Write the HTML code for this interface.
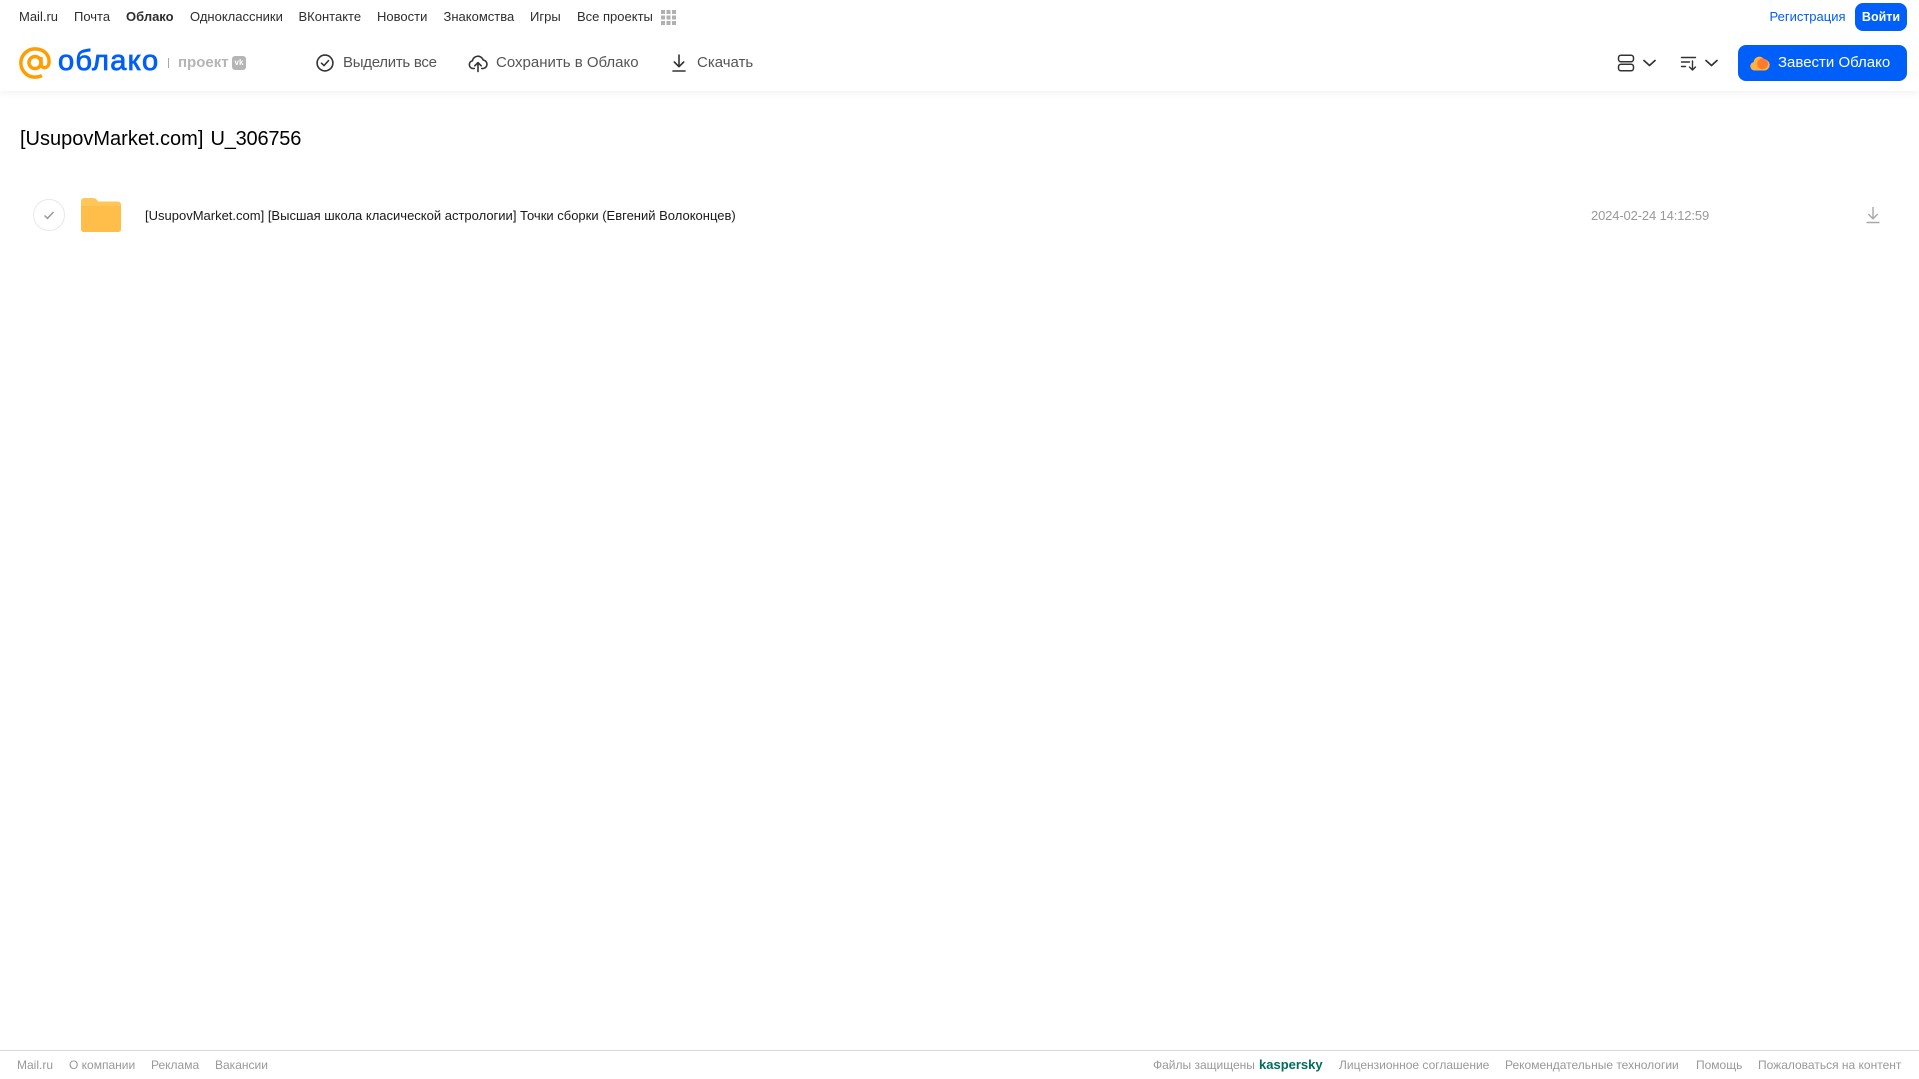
<!DOCTYPE html>
<html lang="ru">
<head>
<meta charset="utf-8">
<title>Облако</title>
<style>
html,body{margin:0;padding:0;background:#fff}
body{width:1919px;height:1079px;position:relative;overflow:hidden;font-family:"Liberation Sans",Arial,sans-serif;color:#333}
.t{position:absolute;white-space:nowrap;line-height:20px}
.n{font-size:13px;top:7px;color:#2c2d2e}
.a{font-size:15px;top:53px;color:#545558}
.f{font-size:12px;top:1055px;color:#999}
svg{position:absolute;display:block}
#hdr{position:absolute;left:0;top:0;width:1919px;height:91px;background:#fff;box-shadow:0 1px 8px rgba(0,0,0,.07)}
.btn{position:absolute;background:#005ff9}
</style>
</head>
<body>
<div id="hdr"></div>

<div class="t n" style="left:19px">Mail.ru</div>
<div class="t n" style="left:74px">Почта</div>
<div class="t n" style="left:126px;font-weight:bold">Облако</div>
<div class="t n" style="left:190px">Одноклассники</div>
<div class="t n" style="left:298.500px">ВКонтакте</div>
<div class="t n" style="left:377px">Новости</div>
<div class="t n" style="left:443.500px">Знакомства</div>
<div class="t n" style="left:530px">Игры</div>
<div class="t n" style="left:577px">Все проекты</div>
<svg style="left:661px;top:10px" width="15" height="15" viewBox="0 0 15 15" fill="#b0b0b0">
<rect x="0" y="0" width="4" height="4"/><rect x="5.500" y="0" width="4" height="4"/><rect x="11" y="0" width="4" height="4"/>
<rect x="0" y="5.500" width="4" height="4"/><rect x="5.500" y="5.500" width="4" height="4"/><rect x="11" y="5.500" width="4" height="4"/>
<rect x="0" y="11" width="4" height="4"/><rect x="5.500" y="11" width="4" height="4"/><rect x="11" y="11" width="4" height="4"/>
</svg>

<div class="t n" style="left:1769.500px;color:#005ff9">Регистрация</div>
<div class="btn" style="left:1855px;top:3px;width:52px;height:28px;border-radius:8px"></div>
<div class="t" style="left:1855px;top:7px;width:52px;text-align:center;font-size:12.500px;color:#fff;font-weight:bold">Войти</div>

<!-- logo -->
<svg style="left:19px;top:47px" width="32" height="32" viewBox="0 0 35 35" fill="none" stroke="#ff9e00" stroke-width="3.800">
<circle cx="17.500" cy="17" r="6.600"/>
<path d="M24.100 11v7.500c0 5.500 7.700 5.500 8.600-.5C34 8 26.500 2 17.500 2 9 2 2 9 2 17.500S9 33 17.500 33c3 0 5.300-.6 7.500-1.800"/>
</svg>
<div class="t" id="logo" style="left:58px;top:41px;font-size:29px;line-height:40px;font-weight:normal;color:#005ff9;letter-spacing:1.300px;-webkit-text-stroke:.8px #005ff9">облако</div>
<div style="position:absolute;left:168px;top:58px;width:1px;height:10px;background:#aaa"></div>
<div class="t" style="left:178px;top:53px;font-size:15px;font-weight:bold;color:#b5b5b5">проект</div>
<div style="position:absolute;left:232px;top:56px;width:14px;height:14px;border-radius:3px;background:#b5b5b5;color:#fff;font-size:8px;line-height:14px;text-align:center;font-weight:bold">vk</div>

<!-- toolbar -->
<svg style="left:315px;top:53px" width="20" height="20" viewBox="0 0 20 20" fill="none" stroke="#333" stroke-width="1.600" stroke-linecap="round" stroke-linejoin="round">
<circle cx="10" cy="10" r="7.900"/><path d="M6.500 10.200l2.500 2.400 4.500-5"/>
</svg>
<div class="t a" style="left:343px;letter-spacing:-.28px">Выделить все</div>

<svg style="left:468px;top:53px" width="20" height="20" viewBox="0 0 20 20" fill="none" stroke="#333" stroke-width="1.600" stroke-linecap="round" stroke-linejoin="round">
<path d="M6.300 15.500H5a3.900 3.900 0 0 1-.6-7.700A5.600 5.600 0 0 1 15.200 7a4.300 4.300 0 0 1 .2 8.500h-1.700"/><path d="M10 18.500V10M6.800 12.800L10 9.600l3.200 3.200"/>
</svg>
<div class="t a" style="left:496px">Сохранить в Облако</div>

<svg style="left:669px;top:53px" width="20" height="20" viewBox="0 0 20 20" fill="none" stroke="#333" stroke-width="1.600" stroke-linecap="round" stroke-linejoin="round">
<path d="M10 2v11.500M5.300 9l4.700 4.700L14.700 9M4 18h12"/>
</svg>
<div class="t a" style="left:697px">Скачать</div>

<svg style="left:1617px;top:54px" width="18" height="18" viewBox="0 0 18 18" fill="none" stroke="#333" stroke-width="1.500">
<rect x="1.500" y="1.200" width="15" height="6.600" rx="2.500"/><rect x="1.500" y="10.200" width="15" height="6.600" rx="2.500"/>
</svg>
<svg style="left:1642px;top:58px" width="15" height="10" viewBox="0 0 15 10" fill="none" stroke="#333" stroke-width="1.700" stroke-linecap="round" stroke-linejoin="round"><path d="M2 2.500l5.500 5 5.500-5"/></svg>
<svg style="left:1680px;top:54px" width="18" height="18" viewBox="0 0 18 18" fill="none" stroke="#333" stroke-width="1.400" stroke-linecap="round" stroke-linejoin="round">
<path d="M1.500 3.500h14M1.500 8h8M1.500 12.500h4M12.500 7v9M9.500 13l3 3 3-3"/>
</svg>
<svg style="left:1704px;top:58px" width="15" height="10" viewBox="0 0 15 10" fill="none" stroke="#333" stroke-width="1.700" stroke-linecap="round" stroke-linejoin="round"><path d="M2 2.500l5.500 5 5.500-5"/></svg>

<div class="btn" style="left:1738px;top:45px;width:169px;height:36px;border-radius:8px"></div>
<svg style="left:1750px;top:53px" width="20" height="19" viewBox="0 0 20 19">
<path fill="#ffb23e" d="M4.500 17.500A4.300 4.300 0 0 1 3.700 9 5.600 5.600 0 0 1 14 6.200a5.700 5.700 0 0 1 1 11.300z"/>
<circle cx="12.600" cy="10.800" r="5.400" fill="#ff7a2e"/>
</svg>
<div class="t a" style="left:1778px;color:#fff">Завести Облако</div>

<!-- title -->
<div class="t" style="left:20px;top:126px;font-size:20px;line-height:26px;color:#000;word-spacing:1.500px">[UsupovMarket.com] <span style="letter-spacing:-.2px">U_306756</span></div>

<!-- row -->
<div style="position:absolute;left:33px;top:199px;width:30px;height:30px;border:1px solid #e7e8ea;border-radius:50%"></div>
<svg style="left:42px;top:208px" width="14" height="14" viewBox="0 0 14 14" fill="none" stroke="#999" stroke-width="1.500"><path d="M2.500 7.500l3 2.800 6-6.300"/></svg>
<svg style="left:81px;top:198px" width="40" height="34" viewBox="0 0 40 34">
<path fill="#ffc75a" d="M0 3a3 3 0 0 1 3-3h9c2 0 2.800 .6 3.800 1.800L17.500 3.500H37a3 3 0 0 1 3 3V10H0z"/>
<path fill="#ffbd4a" d="M0 8h40v23.500a2.500 2.500 0 0 1-2.500 2.500h-35A2.500 2.500 0 0 1 0 31.500z"/>
</svg>
<div class="t" style="left:145px;top:206px;font-size:13px;color:#1a1a1a">[UsupovMarket.com] [Высшая школа класической астрологии] Точки сборки (Евгений Волоконцев)</div>
<div class="t" style="left:1591px;top:206px;font-size:13px;color:#999;letter-spacing:-.14px">2024-02-24 14:12:59</div>
<svg style="left:1865px;top:206px" width="16" height="18" viewBox="0 0 16 18" fill="none" stroke="#a8a8a8" stroke-width="1.400">
<path d="M8 1v11.500M3.300 8l4.700 4.700L12.700 8M1.500 16.500h13"/>
</svg>

<!-- footer -->
<div style="position:absolute;left:0;top:1050px;width:1919px;height:1px;background:#d9d9d9"></div>
<div class="t f" style="left:17px">Mail.ru</div>
<div class="t f" style="left:69px">О компании</div>
<div class="t f" style="left:151px">Реклама</div>
<div class="t f" style="left:215px">Вакансии</div>
<div class="t f" style="left:1153px">Файлы защищены</div>
<div class="t f" style="left:1259px;color:#006d5c;font-weight:bold;font-size:13px">kaspersky</div>
<div class="t f" style="left:1339px">Лицензионное соглашение</div>
<div class="t f" style="left:1505px">Рекомендательные технологии</div>
<div class="t f" style="left:1696px">Помощь</div>
<div class="t f" style="left:1758px">Пожаловаться на контент</div>
</body>
</html>
